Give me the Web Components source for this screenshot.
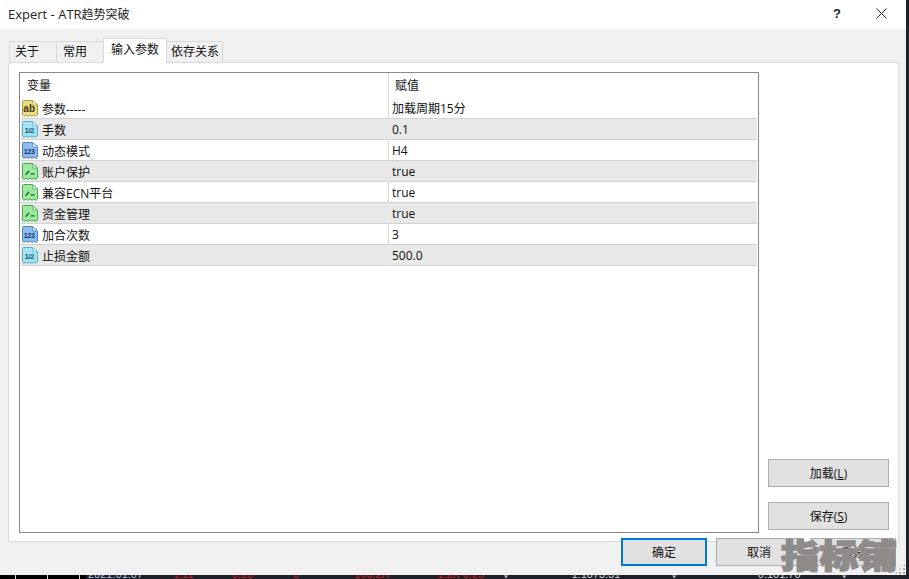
<!DOCTYPE html>
<html><head><meta charset="utf-8"><style>
html,body{margin:0;padding:0;background:#1e2228;width:909px;height:579px;overflow:hidden;font-family:"Liberation Sans","Noto Sans CJK SC",sans-serif}
</style></head><body>
<expert-dialog>
  <param-row slot="rows" icon="ab" name="参数-----" value="加载周期15分"></param-row>
  <param-row slot="rows" icon="half" name="手数" value="0.1" alt></param-row>
  <param-row slot="rows" icon="num" name="动态模式" value="H4"></param-row>
  <param-row slot="rows" icon="bool" name="账户保护" value="true" alt></param-row>
  <param-row slot="rows" icon="bool" name="兼容ECN平台" value="true"></param-row>
  <param-row slot="rows" icon="bool" name="资金管理" value="true" alt></param-row>
  <param-row slot="rows" icon="num" name="加合次数" value="3"></param-row>
  <param-row slot="rows" icon="half" name="止损金额" value="500.0" alt></param-row>
</expert-dialog>
<chart-strip></chart-strip>
<script>
const FONT='"Open Sans","Noto Sans CJK SC",sans-serif';
const ICONS={
 ab:{f:'#efdc8a',s:'#a89a3c',d:'#fdf8dc',t:'ab',c:'#3c3608',z:10,ls:0},
 half:{f:'#a4e4f2',s:'#58aec4',d:'#e6fafe',t:'1/2',c:'#0f6078',z:8,ls:-.6},
 num:{f:'#8dbdee',s:'#4a80bc',d:'#dcecfc',t:'123',c:'#0e3568',z:7,ls:-.2},
 bool:{f:'#9fe8a0',s:'#46ac58',d:'#e2fae2',t:'',c:'',z:0,ls:0}
};
class ParamRow extends HTMLElement{
 connectedCallback(){
  const i=ICONS[this.getAttribute('icon')];
  const r=this.shadowRoot||this.attachShadow({mode:'open'});
  const glyph=i.t?`<text x="7.2" y="11.8" text-anchor="middle" font-family="Liberation Sans" font-weight="700" letter-spacing="${i.ls}" font-size="${i.z}" fill="${i.c}">${i.t}</text>`
   :`<path d="M3.5 11.8L7.2 7.8M8.6 10.8H12.6" fill="none" stroke="#0f6426" stroke-width="1.3"/>`;
  r.innerHTML=`<style>
  :host{display:grid;grid-template-columns:367px 1fr;height:21px;box-sizing:border-box;border-bottom:1px solid #d2d2d2;background:#fff;color:#111;font:12px ${FONT}}
  :host([alt]){background:#e8e8e8}
  .n{display:flex;align-items:center;gap:4px;padding:0 0 0 1px;white-space:nowrap}
  .n span{padding-top:1px}
  .v{padding:1px 0 0 3px;line-height:20px;white-space:nowrap;border-left:1px solid #d6d6d6}
  :host([alt]) .v{border-left-color:#e8e8e8}
  svg{flex:none;display:block}
  </style>
  <div class="n"><svg width="16" height="17" viewBox="0 0 16 17"><path d="M.5 1.5Q.5 .5 1.5 .5H10.5L15.5 5V15L14 16.4L12 15L10 16.4L8 15L6 16.4L4 15L2 16.4L.5 15Z" fill="${i.f}" stroke="${i.s}"/><path d="M10.5 .5V5H15.5Z" fill="${i.d}" stroke="${i.s}" stroke-width=".7"/>${glyph}</svg><span>${this.getAttribute('name')}</span></div>
  <div class="v">${this.getAttribute('value')}</div>`;
 }
}
customElements.define('param-row',ParamRow);
class TabItem extends HTMLElement{
 constructor(){super();this.attachShadow({mode:'open'}).innerHTML=`<style>
 :host{display:block;box-sizing:border-box;height:21px;margin-top:1px;background:#f0f0f0;border:1px solid #d9d9d9;border-bottom:0;margin-right:-1px;font:12px/20px ${FONT};color:#111;padding-left:var(--pl);white-space:nowrap}
 :host([active]){height:25px;margin-top:-2px;background:#fff;position:relative;z-index:1;line-height:21px}
 </style><slot></slot>`}
}
customElements.define('tab-item',TabItem);
class DlgButton extends HTMLElement{
 constructor(){super();this.attachShadow({mode:'open'}).innerHTML=`<style>
 :host{display:flex;align-items:center;justify-content:center;box-sizing:border-box;height:28px;background:#e1e1e1;border:1px solid #adadad;font:12px ${FONT};color:#111;white-space:nowrap}
 :host([primary]){border:2px solid #0078d7}
 </style><slot></slot>`}
}
customElements.define('dlg-button',DlgButton);
class ChartStrip extends HTMLElement{
 constructor(){super();this.attachShadow({mode:'open'}).innerHTML=`<style>
 :host{display:flex;height:4px;width:909px;overflow:hidden;background:#1e2228;font:11px/12px "Liberation Sans",sans-serif;white-space:nowrap}
 .black{width:86px;flex:none;height:4px;display:flex;background:#000;padding-left:15px;box-sizing:border-box;gap:31px}
 .black i{width:1px;height:4px;background:#d8d8d8}
 span{margin-top:-7px;flex:none;color:#e01010}
 .b{color:#a8c4e8}.w{color:#c8d0d8}
 </style><div class="black"><i></i><i></i><i></i></div>
 <span class="b" style="margin-left:2px">2021.01.07</span><span style="margin-left:30px">1.11</span><span style="margin-left:38px">0.28</span><span style="margin-left:40px">0</span><span style="margin-left:55px">103.2K</span><span style="margin-left:48px">1.2K</span><span style="margin-left:3px">0.29</span><span class="w" style="margin-left:18px">V</span><span class="w" style="margin-left:62px">1.1073.31</span><span class="w" style="margin-left:50px">V</span><span class="w" style="margin-left:80px">0.101.70</span><span class="w" style="margin-left:40px">V</span>`}
}
customElements.define('chart-strip',ChartStrip);
class ExpertDialog extends HTMLElement{
 constructor(){super();this.attachShadow({mode:'open'}).innerHTML=`<style>
 :host{display:flex;flex-direction:column;width:906px;height:575px;background:#f0f0f0;position:relative;color:#111;font:12px ${FONT}}
 .title{height:29px;flex:none;background:#fff;display:flex;align-items:center;padding-left:8px;font-size:12px;color:#222}
 .title span{flex:1;padding-bottom:1px}
 .title b{font-weight:400;font-size:13px}
 .help{width:12px;font:700 13px "Liberation Sans",sans-serif;text-align:center;margin:0 33px 2px 0;color:#222}
 .close{margin:0 19px 2px 0;display:block}
 .body{flex:1;display:flex;flex-direction:column;padding:11px 7px 0 8px;min-height:0}
 .tabs{display:flex;height:22px;flex:none;padding-left:1px;position:relative}
 .panel{height:480px;flex:none;box-sizing:border-box;background:#fff;border:1px solid #d9d9d9;padding:9px 9px 8px 10px;display:flex;gap:9px}
 .list{width:740px;box-sizing:border-box;border:1px solid #8a8a8a;flex:none;background:#fff;padding:0 1px}
 .head{display:grid;grid-template-columns:367px 1fr;height:25px}
 .head div{padding-left:6px;line-height:25px}
 .head div+div{border-left:1px solid #d6d6d6}
 .side{flex:1;display:flex;flex-direction:column;justify-content:flex-end;gap:15px;padding-bottom:3px}
 .foot{display:flex;gap:9px;margin-top:-4px;padding-left:613px;position:relative}
 .mark{position:absolute;left:781px;top:534px;font:900 33px/40px "Noto Sans CJK SC",sans-serif;color:#8f8b8b;white-space:nowrap;z-index:3;-webkit-text-stroke:1.5px #8f8b8b;transform:scaleX(1.17);transform-origin:0 50%}
 .grip{position:absolute;right:1px;bottom:1px;width:10px;height:10px;background:radial-gradient(circle at 1px 1px,#a8a8a8 1px,transparent 1.2px) 0 0/4px 4px;clip-path:polygon(100% 0,100% 100%,0 100%)}
 </style>
 <div class="title"><span><b>Expert - ATR</b>趋势突破</span><div class="help">?</div>
 <svg class="close" width="11" height="11" viewBox="0 0 11 11"><path d="M.5.5L10.5 10.5M10.5.5L.5 10.5" stroke="#222" stroke-width="1" fill="none"/></svg></div>
 <div class="body">
  <div class="tabs"><tab-item style="width:48px;--pl:5px">关于</tab-item><tab-item style="width:48px;--pl:6px">常用</tab-item><tab-item active style="width:64px;--pl:7px">输入参数</tab-item><tab-item style="width:57px;--pl:4px">依存关系</tab-item></div>
  <div class="panel">
   <div class="list"><div class="head"><div>变量</div><div>赋值</div></div><slot name="rows"></slot></div>
   <div class="side"><dlg-button>加载(<u>L</u>)</dlg-button><dlg-button>保存(<u>S</u>)</dlg-button></div>
  </div>
  <div class="foot"><dlg-button primary style="width:86px">确定</dlg-button><dlg-button style="width:86px">取消</dlg-button><dlg-button style="width:86px;margin-left:-1px">重设</dlg-button></div>
 </div>
 <div class="mark">指标铺</div><div class="grip"></div>`}
}
customElements.define('expert-dialog',ExpertDialog);
</script>
</body></html>
